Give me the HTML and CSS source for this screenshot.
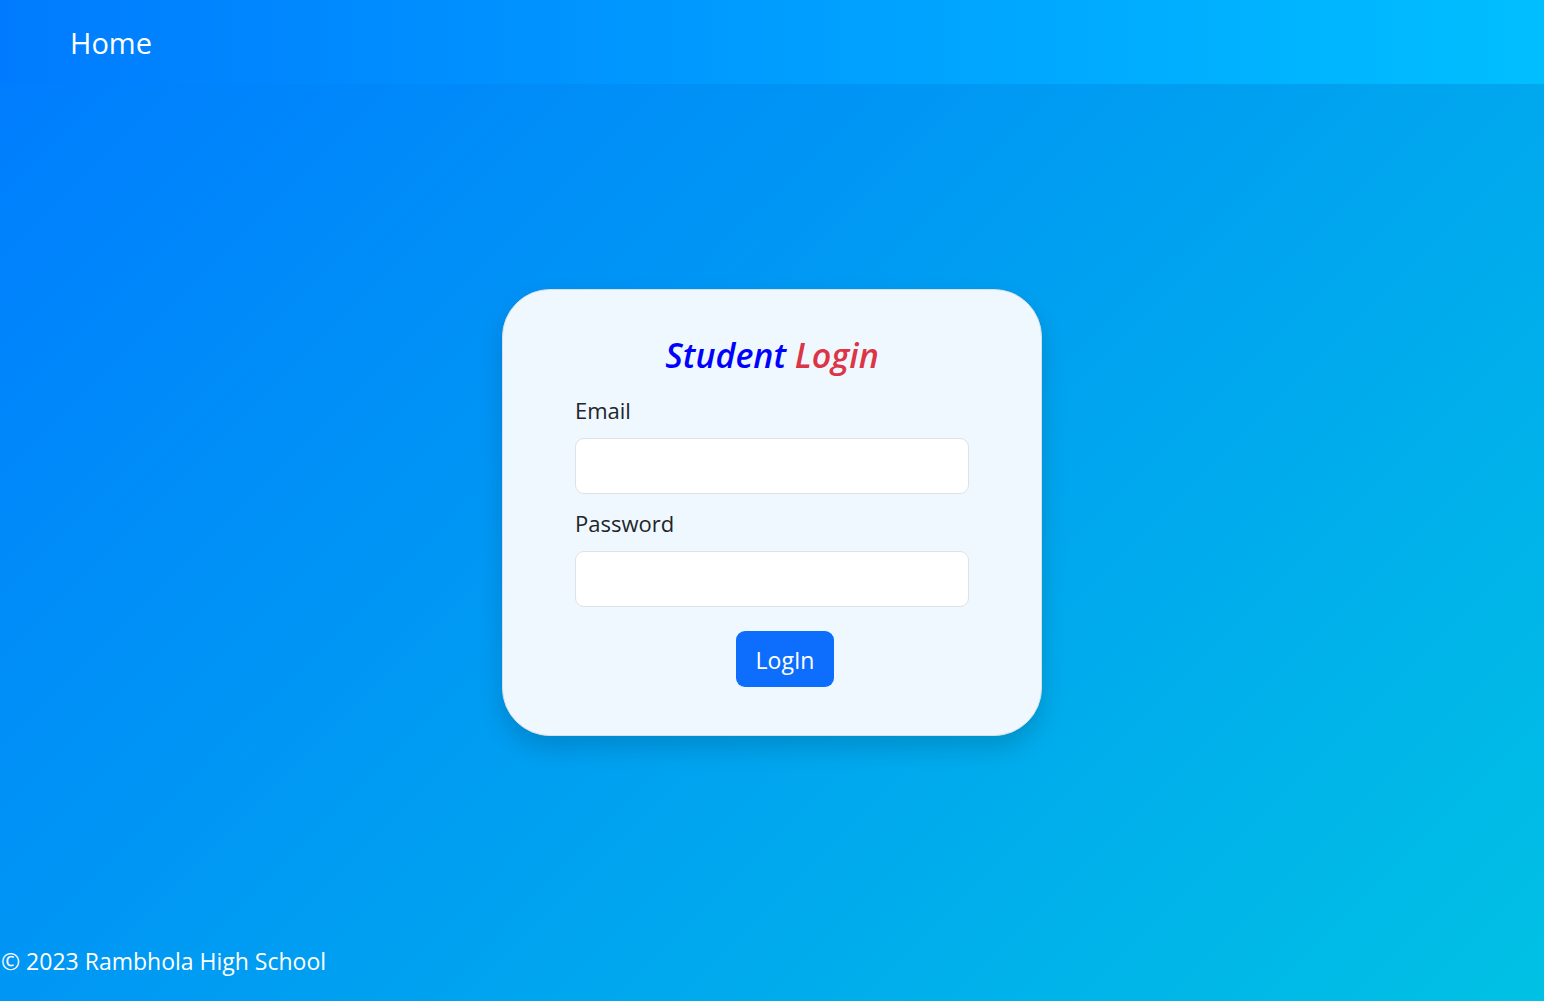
FILE: index.html
```html
<!DOCTYPE html>
<html lang="en">
<head>
<meta charset="utf-8">
<title>Student Login</title>
<link rel="stylesheet" href="styles.css">
</head>
<body>
<nav class="navbar"><a class="nav-link" href="#">Home</a></nav>
<main class="main">
<form class="card">
<h1 class="title"><span class="title-student">Student</span> <span class="title-login">Login</span></h1>
<label class="label" for="email">Email</label>
<input class="input" id="email" type="email">
<label class="label" for="password">Password</label>
<input class="input" id="password" type="password">
<button class="button" type="submit">LogIn</button>
</form>
</main>
<footer class="footer">© 2023 Rambhola High School</footer>
</body>
</html>
```
FILE: styles.css
```css
* { box-sizing: border-box; }
body {
  margin: 0;
  min-height: 100vh;
  display: flex;
  flex-direction: column;
  font-family: "Segoe UI", "Open Sans", "Noto Sans", sans-serif;
  font-size: 23px;
  line-height: 36px;
  color: #212529;
  background: linear-gradient(135deg, #007bff, #00c1e4);
}
.navbar {
  display: flex;
  padding: 25px 70px 23px;
  background: linear-gradient(to right, #007bff, #00bfff);
}
.nav-link {
  color: #fff;
  font-size: 29px;
  text-decoration: none;
}
.main {
  flex: 1;
  display: flex;
  align-items: center;
  justify-content: center;
}
.card {
  width: 540px;
  max-width: 100%;
  display: flex;
  flex-direction: column;
  padding: 40px 72px 48px;
  background: #f0f8ff;
  border: 1px solid #d5e0e8;
  border-radius: 48px;
  box-shadow: 0 12px 24px rgba(0, 0, 0, 0.15);
}
.title {
  margin: 0 0 13px;
  font-size: 34px;
  line-height: 50px;
  font-weight: 600;
  font-style: italic;
  text-align: center;
}
.title-student { color: #00f; }
.title-login { color: #dc3545; }
.label {
  margin-bottom: 11px;
  font-size: 22px;
  line-height: 34px;
}
.input {
  width: 100%;
  height: 56px;
  margin-bottom: 12px;
  padding: 8px 18px;
  font: inherit;
  color: inherit;
  background: #fff;
  border: 1px solid #dee2e6;
  border-radius: 9px;
}
.button {
  align-self: center;
  height: 56px;
  margin: 12px 0 0 26px;
  padding: 2px 20px 0;
  font: inherit;
  color: #fff;
  background: #0d6efd;
  border: 0;
  border-radius: 9px;
}
.footer {
  padding: 2px 1px 22px;
  color: #fff;
}
```
